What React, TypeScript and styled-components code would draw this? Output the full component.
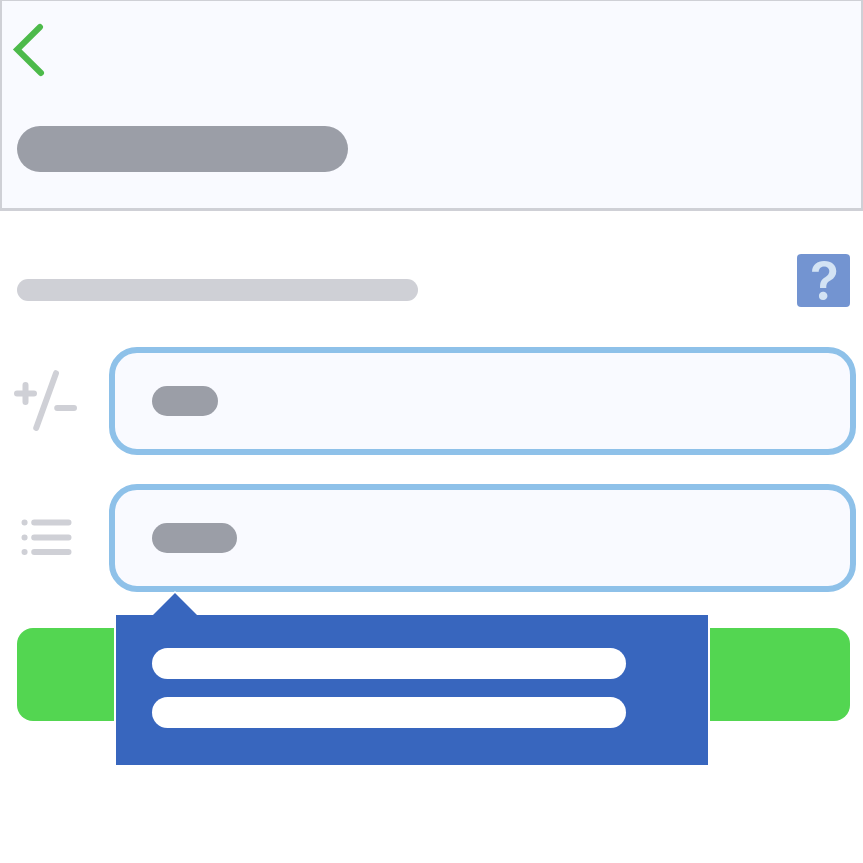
import React from "react";
import styled, { createGlobalStyle } from "styled-components";

const color = {
  panel: "#f9faff",
  line: "#cfd0d6",
  muted: "#cfd0d6",
  ink: "#9b9ea7",
  outline: "#8ec1e9",
  popover: "#3866be",
  action: "#53d651",
  back: "#4dba4b",
  help: "#7394d1",
  helpMark: "#d3e3f4",
};

const GlobalStyle = createGlobalStyle`
  *, *::before, *::after { box-sizing: border-box; }
  body { margin: 0; background: #fff; font-family: Inter, "Liberation Sans", sans-serif; }
  button, input { font: inherit; }
`;

const Page = styled.div`
  min-height: 100vh;
`;

const Header = styled.header`
  display: flex;
  flex-direction: column;
  align-items: flex-start;
  gap: 49px;
  padding: 22px 15px 36px;
  background: ${color.panel};
  border: 2px solid ${color.line};
  border-top-width: 1px;
  border-bottom-width: 3px;
`;

const BackButton = styled.button`
  display: block;
  margin-left: -6px;
  padding: 0;
  border: 0;
  background: none;
  cursor: pointer;
  svg { display: block; }
`;

const Bar = styled.span<{ $width: number; $height: number; $tone: string }>`
  display: block;
  flex: none;
  width: ${(p) => p.$width}px;
  max-width: 100%;
  height: ${(p) => p.$height}px;
  border-radius: ${(p) => p.$height / 2}px;
  background: ${(p) => p.$tone};
`;

const Title = styled.h1`
  margin: 0;
  max-width: 100%;
`;

const Form = styled.form`
  display: flex;
  flex-direction: column;
  padding: 43px 7px 80px 14px;
`;

const Intro = styled.div`
  display: flex;
  align-items: flex-end;
  justify-content: space-between;
  padding: 0 6px 0 3px;
  margin-bottom: 40px;
`;

const Summary = styled.div`
  padding-bottom: 6px;
`;

const HelpButton = styled.button`
  display: flex;
  flex: none;
  align-items: center;
  justify-content: center;
  width: 53px;
  height: 53px;
  padding: 2px 0 0 2px;
  border: 0;
  border-radius: 4px;
  background: ${color.help};
  color: ${color.helpMark};
  font-size: 53px;
  font-weight: 600;
  line-height: 53px;
  cursor: pointer;
`;

const Fields = styled.div`
  display: grid;
  gap: 29px;
`;

const FieldRow = styled.div`
  display: grid;
  grid-template-columns: 63px minmax(0, 1fr);
  column-gap: 32px;
  align-items: center;
`;

const FieldLabel = styled.label`
  display: flex;
  justify-content: center;
  svg { display: block; }
`;

const FieldBox = styled.div`
  position: relative;
  display: flex;
  align-items: center;
  height: 108px;
  padding: 0 37px;
  border: 6px solid ${color.outline};
  border-radius: 28px;
  background: ${color.panel};
`;

const FieldInput = styled.input`
  flex: 1;
  min-width: 0;
  height: 64px;
  padding: 0 12px;
  border: 0;
  outline: 0;
  background: transparent;
  color: ${color.ink};
  font-size: 32px;
`;

const Popover = styled.div`
  position: absolute;
  z-index: 1;
  top: 125px;
  left: -1px;
  display: grid;
  gap: 18px;
  width: 596px;
  max-width: 100%;
  padding: 33px 36px 37px;
  border: solid #fff;
  border-width: 0 2px;
  background: ${color.popover};
`;

const PopoverArrow = styled.svg`
  position: absolute;
  top: -24px;
  left: 35px;
  display: block;
`;

const SubmitButton = styled.button`
  height: 93px;
  margin: 36px 6px 0 3px;
  border: 0;
  border-radius: 16px;
  background: ${color.action};
  cursor: pointer;
`;

function BackIcon() {
  return (
    <svg width="34" height="54" viewBox="0 0 34 54" fill="none" aria-hidden="true">
      <path
        d="M29 4 L6.2 26.5 L30 50"
        stroke={color.back}
        strokeWidth="6"
        strokeLinecap="round"
        strokeLinejoin="miter"
      />
    </svg>
  );
}

function PlusMinusIcon() {
  return (
    <svg width="63" height="62" viewBox="0 0 63 62" fill="none" aria-hidden="true">
      <path
        d="M3 23.5H20M11.5 15V32M42 3.2L22.2 58M43.2 38H60"
        stroke={color.muted}
        strokeWidth="6"
        strokeLinecap="round"
      />
    </svg>
  );
}

function ListIcon() {
  return (
    <svg width="53" height="38" viewBox="0 0 53 38" fill="none" aria-hidden="true">
      <path
        d="M15.2 3.5H49.5M15.2 18.5H49.5M15.2 33H49.5M5.5 3.5h0.1M5.5 18.5h0.1M5.5 33h0.1"
        stroke={color.muted}
        strokeWidth="6"
        strokeLinecap="round"
      />
    </svg>
  );
}

export default function App() {
  return (
    <Page>
      <GlobalStyle />
      <Header>
        <BackButton type="button" aria-label="Back">
          <BackIcon />
        </BackButton>
        <Title>
          <Bar $width={331} $height={46} $tone={color.ink} />
        </Title>
      </Header>
      <main>
        <Form onSubmit={(e) => e.preventDefault()}>
          <Intro>
            <Summary>
              <Bar $width={401} $height={22} $tone={color.muted} />
            </Summary>
            <HelpButton type="button" aria-label="Help">
              ?
            </HelpButton>
          </Intro>
          <Fields>
            <FieldRow>
              <FieldLabel htmlFor="amount" aria-label="Amount">
                <PlusMinusIcon />
              </FieldLabel>
              <FieldBox>
                <Bar $width={66} $height={30} $tone={color.ink} />
                <FieldInput id="amount" type="text" />
              </FieldBox>
            </FieldRow>
            <FieldRow>
              <FieldLabel htmlFor="category" aria-label="Category">
                <ListIcon />
              </FieldLabel>
              <FieldBox>
                <Bar $width={85} $height={30} $tone={color.ink} />
                <FieldInput id="category" type="text" />
                <Popover role="tooltip">
                  <PopoverArrow width="48" height="25" viewBox="0 0 48 25" aria-hidden="true">
                    <path d="M0 24L24 0L48 24Z" fill="#fff" />
                    <path d="M1 25L24 2L47 25Z" fill={color.popover} />
                  </PopoverArrow>
                  <Bar $width={474} $height={31} $tone="#fff" />
                  <Bar $width={474} $height={31} $tone="#fff" />
                </Popover>
              </FieldBox>
            </FieldRow>
          </Fields>
          <SubmitButton type="submit" aria-label="Continue" />
        </Form>
      </main>
    </Page>
  );
}
